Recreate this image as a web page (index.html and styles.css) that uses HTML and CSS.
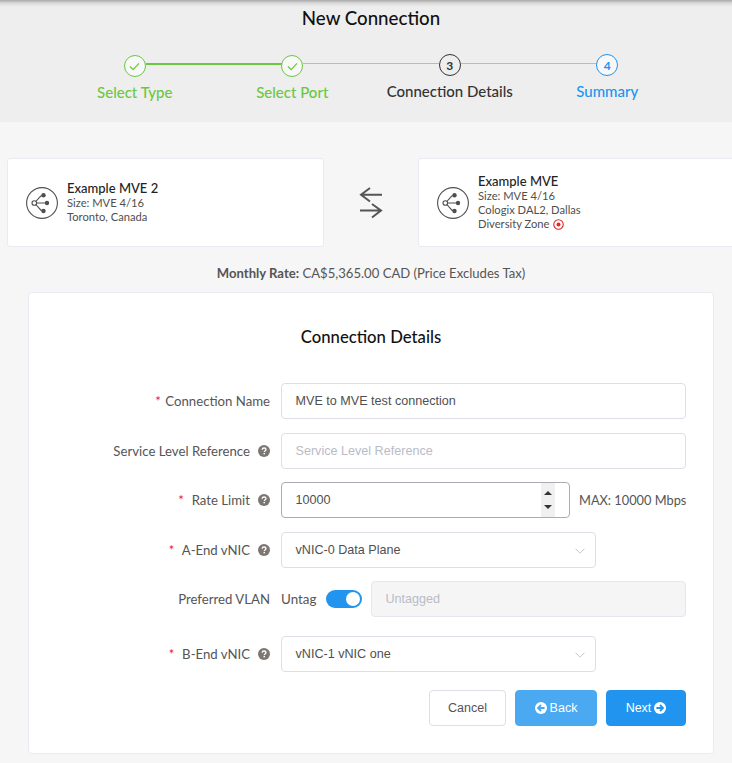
FILE: index.html
```html
<!DOCTYPE html>
<html lang="en">
<head>
<meta charset="utf-8">
<title>New Connection</title>
<link rel="stylesheet" href="styles.css">
</head>
<body>
<svg class="defs" width="0" height="0" aria-hidden="true">
  <symbol id="mve" viewBox="0 0 32 32">
    <circle cx="16" cy="16" r="15.4" fill="none" stroke="#4f4f4f" stroke-width="1.1"/>
    <path d="M8.5 16 H20.5 M8.5 16 L13.5 10.4 Q15 8.3 17 8.3 M8.5 16 L13.5 21.6 Q15 24 17 24" fill="none" stroke="#4f4f4f" stroke-width="1.1"/>
    <circle cx="8.3" cy="16" r="2.3" fill="#fff" stroke="#4f4f4f" stroke-width="1.1"/>
    <circle cx="17.5" cy="8.3" r="2.2" fill="#4f4f4f"/>
    <circle cx="21" cy="16" r="2.2" fill="#4f4f4f"/>
    <circle cx="17.5" cy="24" r="2.2" fill="#4f4f4f"/>
  </symbol>
  <symbol id="help" viewBox="0 0 12 12">
    <circle cx="6" cy="6" r="6" fill="#7d7773"/>
    <path d="M4.1 4.7 C4.2 3.5 5 3 6.1 3 C7.2 3 8 3.6 8 4.5 C8 5.7 6.3 5.7 6.3 7" fill="none" stroke="#fff" stroke-width="1.3"/>
    <rect x="5.5" y="7.9" width="1.5" height="1.4" fill="#fff"/>
  </symbol>
  <symbol id="chev" viewBox="0 0 10 6">
    <path d="M.5 .7 L5 5.2 L9.5 .7" fill="none" stroke="#c3c8d1" stroke-width="1"/>
  </symbol>
</svg>

<header class="top">
  <h1 class="title">New Connection</h1>
  <ol class="steps">
    <li class="step done line-done">
      <span class="dot"><svg class="check" viewBox="0 0 12 10"><path d="M1 5 L4.5 8.5 L11 1.5" fill="none" stroke="#6bc741" stroke-width="1.4"/></svg></span>
      <span class="step-label">Select Type</span>
    </li>
    <li class="step done line-grey">
      <span class="dot"><svg class="check" viewBox="0 0 12 10"><path d="M1 5 L4.5 8.5 L11 1.5" fill="none" stroke="#6bc741" stroke-width="1.4"/></svg></span>
      <span class="step-label">Select Port</span>
    </li>
    <li class="step current line-grey">
      <span class="dot">3</span>
      <span class="step-label">Connection Details</span>
    </li>
    <li class="step upcoming">
      <span class="dot">4</span>
      <span class="step-label">Summary</span>
    </li>
  </ol>
</header>

<main class="content">
  <section class="ends">
    <article class="end-card">
      <svg class="end-icon"><use href="#mve"/></svg>
      <div class="end-text">
        <div class="end-name">Example MVE 2</div>
        <div>Size: MVE 4/16</div>
        <div>Toronto, Canada</div>
      </div>
    </article>
    <svg class="swap" viewBox="0 0 24 32" aria-hidden="true">
      <path d="M23 7.8 H2 M11 1 L2 7.8 L11 14.5" fill="none" stroke="#555" stroke-width="2"/>
      <path d="M1 23.5 H22 M13 17 L22 23.5 L13 30.5" fill="none" stroke="#555" stroke-width="2"/>
    </svg>
    <article class="end-card">
      <svg class="end-icon"><use href="#mve"/></svg>
      <div class="end-text">
        <div class="end-name">Example MVE</div>
        <div>Size: MVE 4/16</div>
        <div>Cologix DAL2, Dallas</div>
        <div class="zone">Diversity Zone
          <svg class="zone-icon" viewBox="0 0 10 10"><circle cx="5" cy="5" r="4.3" fill="none" stroke="#e2262a" stroke-width="1"/><circle cx="5" cy="5" r="1.8" fill="#e2262a"/></svg>
        </div>
      </div>
    </article>
  </section>

  <p class="rate"><b>Monthly Rate:</b> CA$5,365.00 CAD (Price Excludes Tax)</p>

  <section class="panel">
    <h2 class="panel-title">Connection Details</h2>
    <form class="form">
      <div class="row">
        <label class="label"><span class="req">*</span> Connection Name</label>
        <div class="field"><div class="input">MVE to MVE test connection</div></div>
      </div>
      <div class="row">
        <label class="label">Service Level Reference<svg class="help"><use href="#help"/></svg></label>
        <div class="field"><div class="input placeholder">Service Level Reference</div></div>
      </div>
      <div class="row row-rate">
        <label class="label"><span class="req">*</span>&nbsp; Rate Limit<svg class="help"><use href="#help"/></svg></label>
        <div class="field">
          <div class="input number">10000
            <span class="spin"><i class="up"></i><i class="down"></i></span>
          </div>
          <span class="max">MAX: 10000 Mbps</span>
        </div>
      </div>
      <div class="row">
        <label class="label"><span class="req">*</span>&nbsp; A-End vNIC<svg class="help"><use href="#help"/></svg></label>
        <div class="field"><div class="input select">vNIC-0 Data Plane<svg class="chev"><use href="#chev"/></svg></div></div>
      </div>
      <div class="row row-vlan">
        <label class="label">Preferred VLAN</label>
        <div class="field">
          <span class="untag">Untag</span>
          <span class="toggle"><span class="knob"></span></span>
          <div class="input disabled">Untagged</div>
        </div>
      </div>
      <div class="row row-bend">
        <label class="label"><span class="req">*</span>&nbsp; B-End vNIC<svg class="help"><use href="#help"/></svg></label>
        <div class="field"><div class="input select">vNIC-1 vNIC one<svg class="chev"><use href="#chev"/></svg></div></div>
      </div>
      <div class="actions">
        <button type="button" class="btn cancel">Cancel</button>
        <button type="button" class="btn back"><svg class="arrow" viewBox="0 0 12 12"><circle cx="6" cy="6" r="6" fill="#fff"/><path d="M9.6 6 H3.6 M6 3 L3 6 L6 9" fill="none" stroke="#4aa9f1" stroke-width="1.8"/></svg> Back</button>
        <button type="button" class="btn next">Next <svg class="arrow" viewBox="0 0 12 12"><circle cx="6" cy="6" r="6" fill="#fff"/><path d="M2.4 6 H8.4 M6 3 L9 6 L6 9" fill="none" stroke="#2194ef" stroke-width="1.8"/></svg></button>
      </div>
    </form>
  </section>
</main>
</body>
</html>
```

FILE: styles.css
```css
* { box-sizing: border-box; }
html, body { margin: 0; height: 763px; overflow: hidden; }
body {
  background: #f6f6f6;
  font-family: "Lato", "Noto Sans", sans-serif;
  color: #4f4f4f;
}
.defs { position: absolute; }

.top {
  height: 122px;
  background: #eeeeee;
  background-image: linear-gradient(#a8a8a8, #d8d8d8 3px, #eeeeee 7px);
  padding-top: 7px;
}
.title {
  margin: 0;
  padding-left: 10px;
  font-size: 18.7px;
  line-height: 22px;
  font-weight: 500;
  color: #111;
  text-align: center;
}
.steps {
  list-style: none;
  margin: 25px 0 0 56px;
  padding: 0;
  display: grid;
  grid-template-columns: repeat(4, 157.5px);
}
.step {
  position: relative;
  display: flex;
  flex-direction: column;
  align-items: center;
}
.step::after {
  content: "";
  position: absolute;
  left: calc(50% + 11px);
  width: 136px;
  top: 9px;
  height: 1px;
  background: #b8bac6;
}
.line-done::after { background: #6bc741; height: 2px; top: 9px; }
.step.upcoming::after { display: none; }
.dot {
  width: 22px;
  height: 22px;
  border-radius: 50%;
  border: 1px solid #333;
  display: flex;
  align-items: center;
  justify-content: center;
  font-size: 12px;
  font-weight: 700;
  color: #333;
}
.done .dot { border-color: #6bc741; background: #f8f8f8; margin-top: 1px; }
.upcoming .dot { border-color: #2194ef; color: #2194ef; background: #f8f8f8; }
.check { width: 11px; height: 9px; }
.step-label {
  margin-top: 6px;
  font-size: 15px;
  line-height: 18px;
  white-space: nowrap;
  font-weight: 500;
}
.done .step-label { color: #6bc741; }
.current .step-label { color: #333; }
.upcoming .step-label { color: #2194ef; }

.content { padding-top: 36px; }
.ends {
  display: flex;
  align-items: center;
  margin-left: 7px;
  width: 740px;
}
.end-card {
  flex: none;
  width: 317px;
  height: 89px;
  background: #fff;
  border: 1px solid #e8ebf2;
  border-radius: 3px;
  display: flex;
  align-items: center;
  gap: 9px;
  padding-left: 18px;
  font-size: 11.2px;
  line-height: 14.3px;
  color: #4f4f4f;
}
.end-icon { width: 32px; height: 32px; flex: none; }
.end-name { font-size: 13px; line-height: 15px; color: #222; font-weight: 500; }
.zone { display: flex; align-items: center; gap: 3px; }
.zone-icon { width: 11px; height: 11px; }
.swap { flex: none; width: 24px; height: 32px; margin: 0 35px; }

.rate {
  margin: 18px 0 0;
  padding-left: 10px;
  text-align: center;
  font-size: 13.1px;
  line-height: 16px;
  color: #555;
}
.rate b { font-weight: 700; }

.panel {
  margin: 11px 18px 0 28px;
  width: 686px;
  height: 462px;
  background: #fff;
  border: 1px solid #e8ebf2;
  border-radius: 4px;
}
.panel-title {
  margin: 33px 0 0;
  text-align: center;
  font-size: 16.7px;
  line-height: 22px;
  font-weight: 500;
  color: #111;
}
.form { margin-top: 35px; padding-right: 27px; }
.row {
  display: flex;
  align-items: center;
  height: 36px;
  margin-bottom: 14px;
}
.row-rate { margin-bottom: 14px; margin-top: -1px; }
.row-vlan { margin-bottom: 19px; margin-top: -1px; }
.label {
  width: 241px;
  flex: none;
  text-align: right;
  font-size: 13.2px;
  color: #555;
  display: flex;
  align-items: center;
  justify-content: flex-end;
  white-space: pre;
}
.req { color: #e8143c; margin-right: 1px; }
.help { width: 12px; height: 12px; margin: -1px 0 0 8px; flex: none; }
.field {
  flex: 1;
  margin-left: 11px;
  display: flex;
  align-items: center;
  min-width: 0;
}
.input {
  flex: 1;
  height: 36px;
  border: 1px solid #dcdfe6;
  border-radius: 4px;
  background: #fff;
  padding-left: 13.5px;
  font-family: "Liberation Sans", Arial, sans-serif;
  font-size: 12.6px;
  line-height: 34px;
  color: #4f4f4f;
  position: relative;
}
.placeholder { color: #b8bcc6; }
.number { flex: none; width: 289px; border-color: #a9acb3; }
.spin {
  position: absolute;
  right: 14px;
  top: 0;
  width: 14px;
  height: 34px;
  background: #f0f0f0;
  display: flex;
  flex-direction: column;
  align-items: center;
  justify-content: space-between;
  padding: 8px 0;
}
.spin i { display: block; width: 0; height: 0; border-left: 4px solid transparent; border-right: 4px solid transparent; }
.up { border-bottom: 4px solid #333; }
.down { border-top: 4px solid #333; }
.max { margin-left: 9px; font-size: 12.8px; color: #555; white-space: nowrap; }
.select { flex: none; width: 315px; }
.chev {
  position: absolute;
  right: 10px;
  top: 15px;
  width: 10px;
  height: 6px;
}
.untag { font-size: 13.4px; color: #555; width: 35px; flex: none; white-space: nowrap; }
.toggle {
  flex: none;
  margin-left: 10px;
  width: 36px;
  height: 18px;
  border-radius: 9px;
  background: #2194ef;
  padding: 2px;
  display: flex;
  justify-content: flex-end;
}
.knob { width: 14px; height: 14px; border-radius: 50%; background: #fff; }
.disabled {
  margin-left: 9px;
  background: #f5f5f6;
  color: #b8bcc6;
  border-color: #e4e7ed;
}
.actions {
  display: flex;
  justify-content: flex-end;
  gap: 9px;
  margin-top: 18px;
}
.btn {
  height: 36px;
  border-radius: 4px;
  border: 1px solid transparent;
  font-family: "Liberation Sans", Arial, sans-serif;
  font-size: 12.5px;
  display: flex;
  align-items: center;
  justify-content: center;
  gap: 3px;
  padding: 0;
}
.cancel { width: 77px; background: #fff; border-color: #dcdfe6; color: #555; }
.back { width: 82px; background: #4aa9f1; border-color: #4aa9f1; color: #fff; }
.next { width: 80px; background: #2194ef; border-color: #2194ef; color: #fff; }
.arrow { width: 12px; height: 12px; }
```
